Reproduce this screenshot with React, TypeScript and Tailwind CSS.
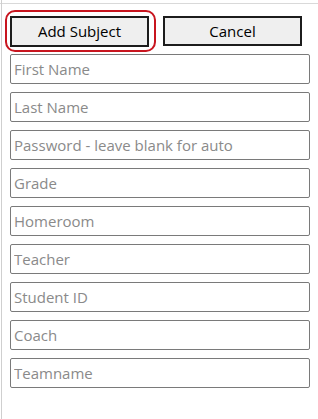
import React from 'react';

const fields = [
  'First Name',
  'Last Name',
  'Password - leave blank for auto',
  'Grade',
  'Homeroom',
  'Teacher',
  'Student ID',
  'Coach',
  'Teamname',
];

export default function App() {
  return (
    <div
      className="relative w-[318px] h-[419px] bg-white overflow-hidden text-[#000]"
      style={{ fontFamily: '"Open Sans", "Noto Sans", "Liberation Sans", sans-serif' }}
    >
      {/* window edges behind the dialog */}
      <div className="absolute left-0 right-0 top-[3px] h-px bg-[#d9d9d9]" />
      <div className="absolute left-[1px] top-0 bottom-0 w-px bg-[#cfcfcf]" />

      <div className="flex flex-col pl-[10px] pt-[16px]">
        <div className="flex gap-[14px]">
          <div className="relative">
            <div className="absolute -left-[5px] -top-[6px] -right-[7px] -bottom-[5px] rounded-[10px] border-2 border-[#c8151f]" />
            <button className="w-[139px] h-[31px] bg-[#efefef] border-2 border-[#1c1c1c] text-[15px] leading-none">
              Add Subject
            </button>
          </div>
          <button className="w-[139px] h-[30px] bg-[#efefef] border-2 border-[#1c1c1c] text-[15px] leading-none">
            Cancel
          </button>
        </div>

        <div className="flex flex-col gap-[8px] mt-[7px]">
          {fields.map((f) => (
            <input
              key={f}
              placeholder={f}
              className="w-[300px] h-[30px] border border-[#7a7a7a] rounded-[2px] px-[3px] text-[15px] placeholder:text-[#8a8a8a] outline-none"
              style={{ fontFamily: '"Open Sans", "Noto Sans", "Liberation Sans", sans-serif' }}
            />
          ))}
        </div>
      </div>
    </div>
  );
}
